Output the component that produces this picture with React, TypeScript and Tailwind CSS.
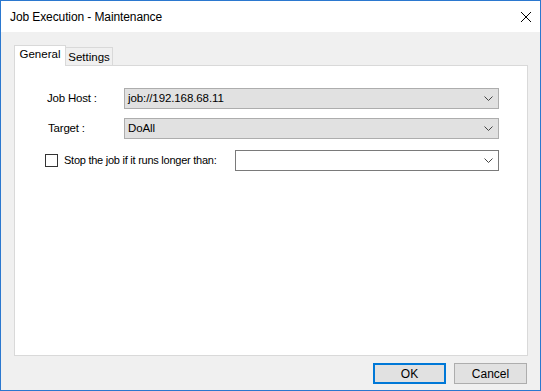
import React from "react";

const Chevron = () => (
  <svg width="9" height="5" viewBox="0 0 9 5" className="shrink-0">
    <path d="M0.5 0.5 L4.5 4.5 L8.5 0.5" fill="none" stroke="#444" strokeWidth="1" />
  </svg>
);

const Combo = ({ value, white }: { value: string; white?: boolean }) => (
  <div
    className={
      "flex items-center h-[21px] pl-[3px] pr-[5px] border " +
      (white ? "bg-white border-[#7a7a7a]" : "bg-[#e1e1e1] border-[#adadad]")
    }
  >
    <span className="flex-1 text-[11.5px] tracking-[-0.1px] text-black leading-none">{value}</span>
    <Chevron />
  </div>
);

export default function App() {
  return (
    <div
      className="w-[541px] h-[391px] flex flex-col border border-[#2b78cf] bg-[#f0f0f0] overflow-hidden"
      style={{ fontFamily: '"Liberation Sans", Arial, sans-serif' }}
    >
      {/* Title bar */}
      <div className="h-[31px] bg-white flex items-center shrink-0">
        <span className="ml-[9px] text-[12px] tracking-[-0.1px] text-black">
          Job Execution - Maintenance
        </span>
        <div className="ml-auto mr-[9px] w-[10px] h-[10px]">
          <svg width="10" height="10" viewBox="0 0 10 10">
            <path d="M0 0 L10 10 M10 0 L0 10" stroke="#000" strokeWidth="1" />
          </svg>
        </div>
      </div>

      {/* Body */}
      <div className="flex-1 flex flex-col pl-[13px] pr-[12px] pt-[12px]">
        {/* Tabs */}
        <div className="flex items-end h-[21px] relative z-10">
          <div className="h-[21px] w-[52px] bg-white border-l border-t border-r border-[#d9d9d9] flex items-start justify-center pt-[3px] -mb-px">
            <span className="text-[11.5px] text-black leading-none">General</span>
          </div>
          <div className="h-[18px] w-[47px] bg-[#f0f0f0] border-t border-r border-[#d9d9d9] flex items-center justify-center">
            <span className="text-[11.5px] text-black leading-none mt-[2px]">Settings</span>
          </div>
        </div>

        {/* Panel */}
        <div className="h-[291px] bg-white border border-[#d9d9d9] flex flex-col pl-[32px] pr-[28px] pt-[22px] gap-[9px]">
          <div className="flex items-center">
            <span className="w-[77px] text-[11.5px] tracking-[-0.2px] text-black">Job Host :</span>
            <div className="flex-1">
              <Combo value="job://192.168.68.11" />
            </div>
          </div>
          <div className="flex items-center">
            <span className="w-[77px] pl-px text-[11.5px] tracking-[-0.2px] text-black">Target :</span>
            <div className="flex-1">
              <Combo value="DoAll" />
            </div>
          </div>
          <div className="flex items-center mt-[2px]">
            <div className="w-[13px] h-[13px] border border-[#333] bg-white -ml-[2px]" />
            <span className="ml-[6px] w-[171px] whitespace-nowrap text-[11px] tracking-[-0.25px] text-black">
              Stop the job if it runs longer than:
            </span>
            <div className="flex-1">
              <Combo value="" white />
            </div>
          </div>
        </div>

        {/* Buttons */}
        <div className="flex justify-end gap-[8px] mt-[7px] pr-[1px]">
          <div className="w-[73px] h-[21px] bg-[#e1e1e1] border-2 border-[#0078d7] flex items-center justify-center">
            <span className="text-[12px] text-black">OK</span>
          </div>
          <div className="w-[73px] h-[21px] bg-[#e1e1e1] border border-[#adadad] flex items-center justify-center">
            <span className="text-[12px] text-black">Cancel</span>
          </div>
        </div>
      </div>
    </div>
  );
}
